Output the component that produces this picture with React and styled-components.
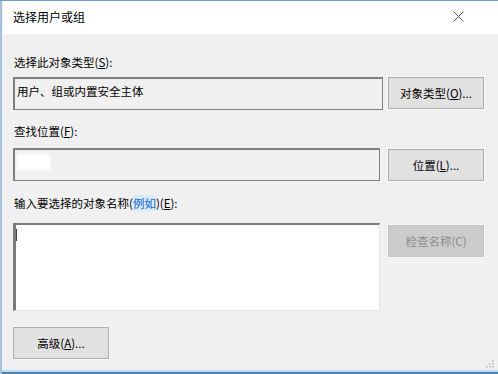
import React from 'react';
import styled, { createGlobalStyle } from 'styled-components';

const GlobalStyle = createGlobalStyle`
  html, body {
    margin: 0;
    padding: 0;
    background: #f0f0f0;
  }
  body {
    font-family: "Noto Sans CJK SC", "Microsoft YaHei", sans-serif;
    font-size: 11.5px;
    color: #000;
  }
`;

const Window = styled.div`
  position: relative;
  width: 498px;
  height: 374px;
  box-sizing: border-box;
  background: #f0f0f0;
  display: flex;
  flex-direction: column;
  box-shadow: inset 0 1px #6f9fd6, inset 2px 0 #a4c0dd, inset 0 -2px #4f80b2,
    inset 0 -4px #bcdcf3;
  overflow: hidden;
`;

const TitleBar = styled.div`
  height: 33px;
  flex: 0 0 33px;
  margin: 1px 0 0 3px;
  background: #fff;
  display: flex;
  align-items: center;
  justify-content: space-between;
  padding: 0 34px 0 10px;
`;

const Title = styled.span`
  font-size: 12px;
  line-height: 16px;
  margin-top: -1px;
`;

const CloseIcon = styled.svg`
  width: 11px;
  height: 11px;
  margin-top: -3px;
`;

const Content = styled.div`
  flex: 1;
  display: flex;
  flex-direction: column;
  padding: 0 0 0 13px;
`;

const Label = styled.div`
  line-height: 16px;
  margin-top: ${({ $top }) => $top}px;
  margin-left: 1px;
  margin-bottom: ${({ $bottom }) => $bottom}px;
`;

const Key = styled.span`
  text-decoration: underline;
`;

const Link = styled.span`
  color: #1565c8;
  background: #d7e8f8;
`;

const Row = styled.div`
  display: flex;
  align-items: flex-start;
  gap: ${({ $gap }) => $gap}px;
`;

const Field = styled.div`
  box-sizing: border-box;
  width: ${({ $width }) => $width}px;
  height: 33px;
  border: 2px solid #7f7f7f;
  border-width: 2px 1px 1px 2px;
  background: #f0f0f0;
  padding: 4px 0 0 2px;
  line-height: 16px;
`;

const Redacted = styled.span`
  display: block;
  width: 33px;
  height: 16px;
  background: #fff;
  filter: blur(1px);
`;

const TextArea = styled.div`
  box-sizing: border-box;
  width: 367px;
  height: 88px;
  background: #fff;
  border-style: solid;
  border-width: 2px 1px 1px 3px;
  border-color: #7a7a7a #e3e3e3 #e3e3e3 #7a7a7a;
  padding: 4px 0 0 0;
`;

const Caret = styled.span`
  display: block;
  width: 1px;
  height: 12px;
  background: #444;
`;

const Button = styled.button`
  box-sizing: border-box;
  width: 96px;
  height: 32px;
  margin-top: ${({ $top }) => $top || 0}px;
  font: inherit;
  line-height: 16px;
  padding: 0;
  color: ${({ disabled }) => (disabled ? '#8a8a8a' : '#000')};
  background: ${({ disabled }) => (disabled ? '#cccccc' : '#e1e1e1')};
  border: 1px solid ${({ disabled }) => (disabled ? '#c4c4c4' : '#adadad')};
  box-shadow: 0 0 0 1px #f7f7f7;
`;

const Grip = styled.svg`
  position: absolute;
  right: 4px;
  bottom: 6px;
  width: 8px;
  height: 8px;
`;

export default function App() {
  return (
    <>
      <GlobalStyle />
      <Window>
        <TitleBar>
          <Title>选择用户或组</Title>
          <CloseIcon viewBox="0 0 11 11">
            <path d="M0.5 0.5 L10.5 10.5 M10.5 0.5 L0.5 10.5" stroke="#555" strokeWidth="1" />
          </CloseIcon>
        </TitleBar>
        <Content>
          <Label $top={20} $bottom={7}>
            选择此对象类型(<Key>S</Key>):
          </Label>
          <Row $gap={5}>
            <Field $width={370}>用户、组或内置安全主体</Field>
            <Button>
              对象类型(<Key>O</Key>)...
            </Button>
          </Row>
          <Label $top={13} $bottom={9}>
            查找位置(<Key>F</Key>):
          </Label>
          <Row $gap={8}>
            <Field $width={367}>
              <Redacted />
            </Field>
            <Button $top={1}>
              位置(<Key>L</Key>)...
            </Button>
          </Row>
          <Label $top={14} $bottom={12}>
            输入要选择的对象名称(<Link>例如</Link>)(<Key>E</Key>):
          </Label>
          <Row $gap={8}>
            <TextArea>
              <Caret />
            </TextArea>
            <Button disabled $top={2}>
              检查名称(C)
            </Button>
          </Row>
          <Row $gap={0}>
            <Button $top={16}>
              高级(<Key>A</Key>)...
            </Button>
          </Row>
        </Content>
        <Grip viewBox="0 0 8 8">
          <rect x="6" y="0" width="1.5" height="1.5" fill="#b5b5b5" />
          <rect x="3" y="3" width="1.5" height="1.5" fill="#b5b5b5" />
          <rect x="6" y="3" width="1.5" height="1.5" fill="#b5b5b5" />
          <rect x="0" y="6" width="1.5" height="1.5" fill="#b5b5b5" />
          <rect x="3" y="6" width="1.5" height="1.5" fill="#b5b5b5" />
          <rect x="6" y="6" width="1.5" height="1.5" fill="#b5b5b5" />
        </Grip>
      </Window>
    </>
  );
}
